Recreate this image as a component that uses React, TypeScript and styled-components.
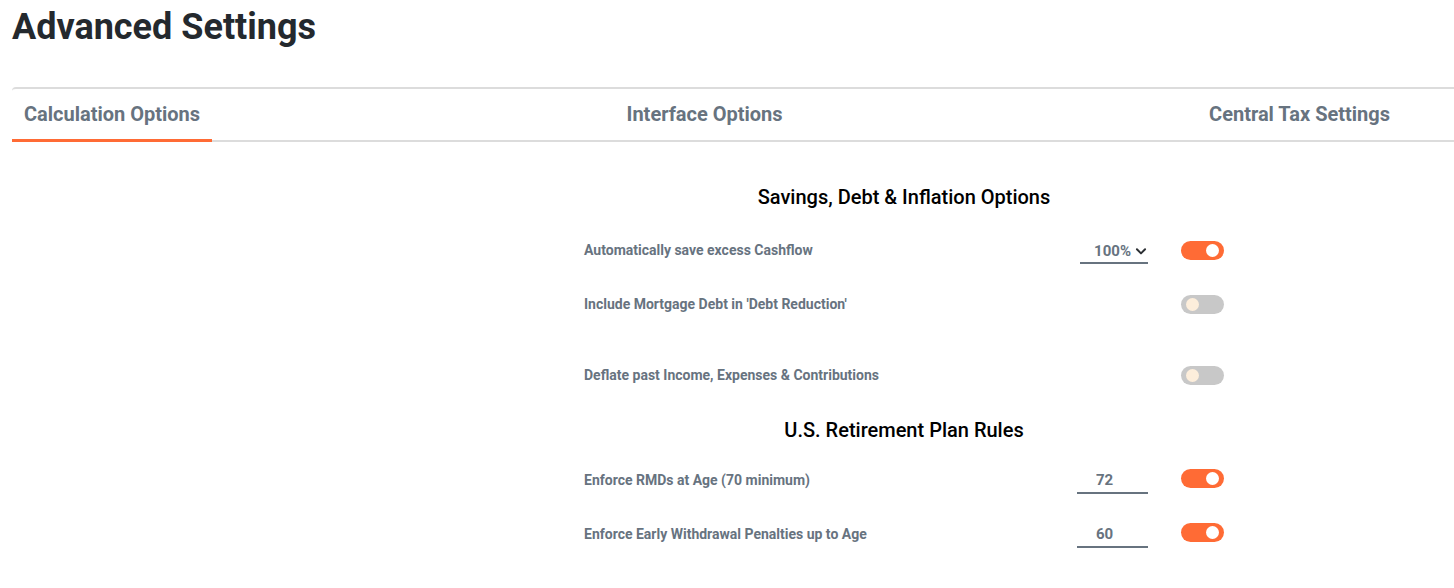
import React, { useState } from 'react';
import styled, { createGlobalStyle } from 'styled-components';

const GlobalStyle = createGlobalStyle`
    html, body {
        margin: 0;
        padding: 0;
        background: #ffffff;
        font-family: Roboto, "Liberation Sans", sans-serif;
    }
`;

const ORANGE = '#ff6b35';
const SLATE = '#67737f';

const Page = styled.div`
    padding: 0 0 0 12px;
`;

const Title = styled.h1`
    margin: 0;
    padding-top: 4px;
    height: 46px;
    font-size: 36px;
    line-height: 46px;
    font-weight: 700;
    color: #24292e;
`;

const TabBar = styled.div`
    margin-top: 37px;
    border-top: 2px solid #dcdcdc;
    border-bottom: 2px solid #dcdcdc;
    border-top-left-radius: 4px;
`;

const TabList = styled.div`
    display: flex;
    justify-content: space-between;
    padding-right: 52px;
`;

const Tab = styled.button<{ active?: boolean }>`
    background: none;
    border: none;
    border-bottom: 3px solid ${p => (p.active ? ORANGE : 'transparent')};
    margin-bottom: -2px;
    padding: 13px 12px 13px;
    font-family: Roboto, "Liberation Sans", sans-serif;
    font-size: 20px;
    font-weight: 700;
    color: ${SLATE};
    cursor: pointer;
    line-height: 24px;
`;

const Content = styled.div`
    width: 640px;
    margin-left: 572px;
    padding-top: 42px;
`;

const SectionTitle = styled.h2<{ top?: number; gap: number }>`
    margin: ${p => p.top ?? 0}px 0 ${p => p.gap}px;
    text-align: center;
    font-size: 20px;
    font-weight: 500;
    color: #000;
    line-height: 26px;
`;

const Row = styled.div<{ tall?: boolean }>`
    display: grid;
    grid-template-columns: 1fr 80px 76px;
    align-items: center;
    align-content: start;
    height: ${p => (p.tall ? 71 : 54)}px;
`;

const Label = styled.span`
    font-size: 14px;
    font-weight: 700;
    color: ${SLATE};
    line-height: 30px;
    transform: translateY(1px);
`;

const Control = styled.div`
    display: flex;
    justify-content: center;
    height: 30px;
    align-items: center;
`;

const SelectBox = styled.div`
    display: flex;
    align-items: center;
    justify-content: flex-end;
    gap: 3px;
    width: 68px;
    margin-left: 12px;
    padding: 0 0 1px;
    border-bottom: 2px solid ${SLATE};
    font-size: 15px;
    font-weight: 700;
    color: ${SLATE};
    line-height: 20px;
    transform: translateY(3px);
`;

const NumberInput = styled.input`
    width: 71px;
    margin-left: 9px;
    border: none;
    border-bottom: 2px solid ${SLATE};
    background: none;
    text-align: left;
    font-family: Roboto, "Liberation Sans", sans-serif;
    font-size: 15px;
    font-weight: 700;
    color: ${SLATE};
    padding: 2px 0 3px 19px;
    box-sizing: border-box;
    outline: none;
    transform: translateY(2px);
`;

const Track = styled.button<{ on: boolean; lift?: boolean }>`
    position: relative;
    width: 43px;
    height: 19px;
    border: none;
    border-radius: 10px;
    padding: 0;
    margin-left: 33px;
    background: ${p => (p.on ? ORANGE : '#c8c8c8')};
    cursor: pointer;
    transform: translateY(${p => (p.lift ? -1 : 1)}px);
`;

const Knob = styled.span<{ on: boolean }>`
    position: absolute;
    top: 3px;
    left: ${p => (p.on ? 25 : 5)}px;
    width: 13px;
    height: 13px;
    border-radius: 50%;
    background: ${p => (p.on ? '#ffffff' : '#fdeedb')};
`;

const Toggle: React.FC<{ initial: boolean; lift?: boolean }> = ({ initial, lift }) => {
    const [on, setOn] = useState(initial);
    return (
        <Track on={on} lift={lift} onClick={() => setOn(!on)}>
            <Knob on={on} />
        </Track>
    );
};

const Chevron = () => (
    <svg width="14" height="14" viewBox="0 0 24 24" fill="none" stroke="#2b2f33" strokeWidth="3.4" strokeLinecap="round" strokeLinejoin="round">
        <polyline points="5 9 12 16 19 9" />
    </svg>
);

const App: React.FC = () => {
    const [rmd, setRmd] = useState('72');
    const [penalty, setPenalty] = useState('60');

    return (
        <>
            <GlobalStyle />
            <Page>
                <Title>Advanced Settings</Title>
                <TabBar>
                    <TabList>
                        <Tab active>Calculation Options</Tab>
                        <Tab>Interface Options</Tab>
                        <Tab>Central Tax Settings</Tab>
                    </TabList>
                </TabBar>
                <Content>
                    <SectionTitle gap={24}>Savings, Debt &amp; Inflation Options</SectionTitle>
                    <Row>
                        <Label>Automatically save excess Cashflow</Label>
                        <Control>
                            <SelectBox>100% <Chevron /></SelectBox>
                        </Control>
                        <Toggle initial={true} />
                    </Row>
                    <Row tall>
                        <Label>Include Mortgage Debt in 'Debt Reduction'</Label>
                        <Control />
                        <Toggle initial={false} />
                    </Row>
                    <Row>
                        <Label>Deflate past Income, Expenses &amp; Contributions</Label>
                        <Control />
                        <Toggle initial={false} />
                    </Row>
                    <SectionTitle top={4} gap={21}>U.S. Retirement Plan Rules</SectionTitle>
                    <Row>
                        <Label>Enforce RMDs at Age (70 minimum)</Label>
                        <Control>
                            <NumberInput value={rmd} onChange={e => setRmd(e.target.value)} />
                        </Control>
                        <Toggle initial={true} lift />
                    </Row>
                    <Row>
                        <Label>Enforce Early Withdrawal Penalties up to Age</Label>
                        <Control>
                            <NumberInput value={penalty} onChange={e => setPenalty(e.target.value)} />
                        </Control>
                        <Toggle initial={true} lift />
                    </Row>
                </Content>
            </Page>
        </>
    );
};

export default App;
